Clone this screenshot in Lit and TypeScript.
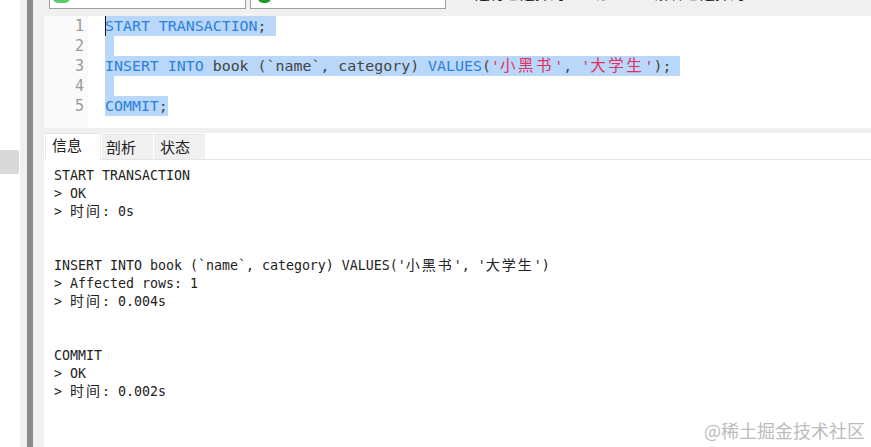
import { LitElement, html, css } from "lit";
import { customElement } from "lit/decorators.js";

@customElement("app-root")
export class AppRoot extends LitElement {
  static styles = css`
    :host { display: block; width: 871px; height: 447px; overflow: hidden; background: #fff; position: relative; }
    .frame { display: flex; height: 447px; }
    .gutter-white { width: 20px; background: #fff; position: relative; }
    .thumb { position: absolute; left: 0; top: 150px; width: 19px; height: 24px; background: #d9d9d9; border-radius: 0 2px 2px 0; }
    .rail-a { width: 7px; background: #f0f0f0; }
    .rail-b { width: 6px; background: #8c8c8c; }
    .rail-c { width: 11px; background: #f0f0f0; }
    .main { flex: 1; min-width: 0; display: flex; flex-direction: column; }

    .toolbar { height: 16px; flex: none; background: #f0f0f0; position: relative; overflow: hidden; display: flex; gap: 4px; padding-left: 5px; }
    .select { box-sizing: border-box; width: 197px; height: 9px; background: #fff; border: 1px solid #a0a0a0; border-top: none; position: relative; overflow: hidden; }
    .select.second { width: 196px; }
    .dot { position: absolute; left: 3px; top: -8px; width: 17px; height: 11px; border-radius: 5px; }
    .second .dot { left: 7px; width: 13px; }
    .green1 { background: #5cc96c; }
    .green2 { background: #1f9a2a; }
    .name { position: absolute; top: -19px; font: 14px/20px "Noto Sans", sans-serif; color: #222; white-space: nowrap; }
    .name.first { left: 34px; }
    .name.other { left: 37px; }
    .actions { position: absolute; left: 413px; top: -18px; display: flex; align-items: center; font: 15px/22px "Noto Sans CJK SC", sans-serif; color: #222; white-space: nowrap; }
    .act-icon { width: 13px; height: 22px; margin-right: 5px; flex: none; display: block; }
    .act { margin-right: 12px; }
    .muted { color: #a8a8a8; }

    .editor { height: 112px; flex: none; display: flex; background: #fff; }
    .nums { width: 44px; flex: none; box-sizing: border-box; background: #fafafa; font: 15px/20px "DejaVu Sans Mono", monospace; color: #999; text-align: right; padding-right: 4px; }
    .code { flex: 1; font: 14.92px/20px "DejaVu Sans Mono", "Noto Sans CJK SC", monospace; color: #444; padding-left: 17px; }
    .line { height: 20px; white-space: pre; }
    .sel { background: #b9d8f9; display: inline-block; height: 20px; vertical-align: top; }
    .eol { padding-right: 9px; }
    .blank { width: 9px; }
    .caret { box-shadow: inset 1px 0 0 #111; }
    .kw { color: #2a7fe0; }
    .str { color: #e0305f; }
    .wide { font-family: "Noto Sans CJK SC", sans-serif; font-size: 15.5px; letter-spacing: 2.6px; line-height: 0; }

    .sep { height: 5px; flex: none; background: #f0f0f0; }
    .tabs { height: 27px; flex: none; display: flex; box-sizing: border-box; border-bottom: 1px solid #e4e4e4; padding-left: 1px; gap: 1px; align-items: flex-end; font: 15px/24px "Noto Sans CJK SC", sans-serif; color: #222; }
    .tab { box-sizing: border-box; width: 51px; height: 25px; padding-left: 4px; background: #f0f0f0; border-top: 1px solid #e6e6e6; }
    .tab:last-child { padding-left: 6px; }
    .tab.active { width: 56px; height: 27px; margin-bottom: -1px; padding-left: 6px; line-height: 22px; background: #fff; border-left: 1px solid #ececec; border-right: 1px solid #ececec; }

    .log { flex: 1; padding: 7px 0 0 10px; font: 13.29px/18px "DejaVu Sans Mono", "Noto Sans CJK SC", monospace; color: #222; }
    .row { height: 18px; white-space: pre; }
    .log .wide { font-size: 14px; letter-spacing: 2px; }

    .wm { position: absolute; right: 6px; top: 418px; font: 18px/24px "Noto Sans CJK SC", sans-serif; color: #bcbcbc; white-space: nowrap; }
  `;

  private time(v: string) {
    return html`<div class="row">&gt; <span class="wide">时间</span>: ${v}</div>`;
  }

  render() {
    return html`<div class="frame">
      <div class="gutter-white"><div class="thumb"></div></div>
      <div class="rail-a"></div>
      <div class="rail-b"></div>
      <div class="rail-c"></div>
      <div class="main">
        <div class="toolbar">
          <div class="select"><span class="dot green1"></span><span class="name first">localhost_3306</span></div>
          <div class="select second"><span class="dot green2"></span><span class="name other">study</span></div>
          <div class="actions">
            <svg class="act-icon" viewBox="0 0 13 22"><path d="M2 0v8l7-8z" fill="#9a9a9a"/></svg>
            <span class="act">运行已选择的</span>
            <svg class="act-icon" viewBox="0 0 13 22"><rect x="0" y="-8" width="11" height="12" fill="none" stroke="#bdbdbd" stroke-width="1.5"/></svg>
            <span class="act muted">停止</span>
            <svg class="act-icon" viewBox="0 0 13 22"><rect x="1" y="-8" width="10" height="12" fill="none" stroke="#555" stroke-width="1.2"/></svg>
            <span>解释已选择的</span>
          </div>
        </div>
        <div class="editor">
          <div class="nums">1<br />2<br />3<br />4<br />5</div>
          <div class="code">
            <div class="line"><span class="sel caret eol"><span class="kw">START TRANSACTION</span>;</span></div>
            <div class="line"><span class="sel blank"></span></div>
            <div class="line"><span class="sel eol"><span class="kw">INSERT INTO</span> book (\`name\`, category) <span class="kw">VALUES</span>(<span class="str">'<span class="wide">小黑书</span>'</span>, <span class="str">'<span class="wide">大学生</span>'</span>);</span></div>
            <div class="line"><span class="sel blank"></span></div>
            <div class="line"><span class="sel"><span class="kw">COMMIT</span>;</span></div>
          </div>
        </div>
        <div class="sep"></div>
        <div class="tabs">
          <div class="tab active">信息</div>
          <div class="tab">剖析</div>
          <div class="tab">状态</div>
        </div>
        <div class="log">
          <div class="row">START TRANSACTION</div>
          <div class="row">&gt; OK</div>
          ${this.time("0s")}
          <div class="row"></div>
          <div class="row"></div>
          <div class="row">INSERT INTO book (\`name\`, category) VALUES('<span class="wide">小黑书</span>', '<span class="wide">大学生</span>')</div>
          <div class="row">&gt; Affected rows: 1</div>
          ${this.time("0.004s")}
          <div class="row"></div>
          <div class="row"></div>
          <div class="row">COMMIT</div>
          <div class="row">&gt; OK</div>
          ${this.time("0.002s")}
        </div>
      </div>
      <div class="wm">@稀土掘金技术社区</div>
    </div>`;
  }
}
